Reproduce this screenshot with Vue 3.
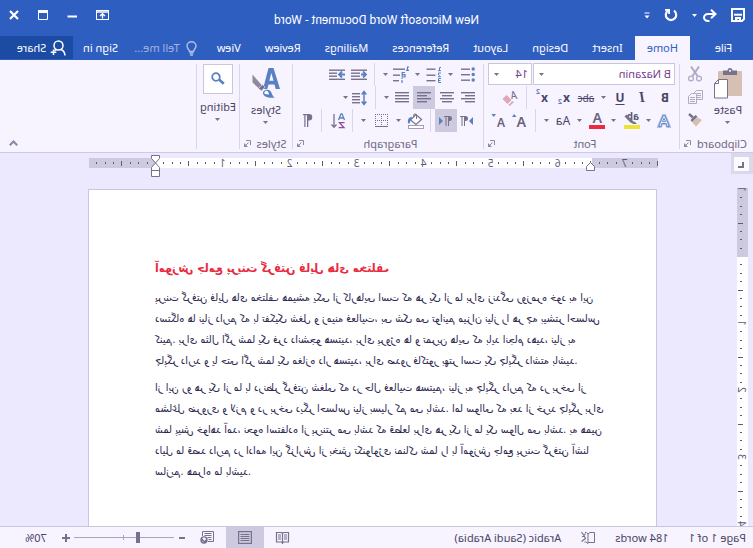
<script setup>
import { h, ref } from 'vue'

const G = '#77728c'
const B = '#5a80c4'

const lines = (list, color = G) =>
  list.map(([x, y, w]) => `<rect x="${x}" y="${y}" width="${w}" height="1.4" fill="${color}"/>`).join('')

const icons = {
  save: [14, 14, '<path d="M1 1h12v12H3L1 11z" fill="none" stroke="#fff" stroke-width="2"/><path d="M3 6.7h8" stroke="#fff" stroke-width="2"/><path d="M4 9h6v4H7.500v-2H6v2H4z" fill="#fff"/>'],
  undo: [14, 13, '<path d="M2 5h7a4 3.500 0 0 1 0 7H7.500" fill="none" stroke="#fff" stroke-width="2"/><path d="M6 .8L1.500 5 6 9.200" fill="none" stroke="#fff" stroke-width="2"/>'],
  redo: [14, 14, '<path d="M4 2.600a5.200 5.200 0 1 0 6 0" fill="none" stroke="#fff" stroke-width="2.200"/><path d="M8 1h5v1.800H9.800V6H8z" fill="#fff"/>'],
  custom: [6, 7, '<path d="M.5 .5h5v1h-5zM.5 3.500h5L3 6.500z" fill="#fff"/>'],
  ribbonOpts: [13, 10, '<rect x=".5" y=".5" width="12" height="9" fill="none" stroke="#fff"/><path d="M0 2h13M6.500 8.500V4M4 6l2.500-2.300L9 6" fill="none" stroke="#fff" stroke-width="1.300"/>'],
  min: [10, 10, '<rect y="5.500" width="9.500" height="2" fill="#fff"/>'],
  max: [10, 10, '<path d="M.5 1v8.500h9V1z" fill="none" stroke="#fff"/><rect width="10" height="3" fill="#fff"/>'],
  close: [10, 10, '<path d="M1 1l8 8M9 1l-8 8" stroke="#fff" stroke-width="2.200"/>'],
  bulb: [11, 15, '<path d="M3.500 10.500C3.500 8.500 1 7.800 1 5a4.500 4.200 0 0 1 9 0c0 2.800-2.500 3.500-2.500 5.500z" fill="none" stroke="#b3c0e4" stroke-width="1.400"/><path d="M3.500 12h4M4 14h3" stroke="#b3c0e4" stroke-width="1.300"/>'],
  person: [16, 16, '<circle cx="7.500" cy="5.500" r="4.500" fill="none" stroke="#fff" stroke-width="1.500"/><path d="M1 15.500c.2-3 1.700-5 4-6M9.500 9.500l2 1M12.500 9.500v5.500M9.700 12.300h5.600" fill="none" stroke="#fff" stroke-width="1.500"/>'],
  caret: [5, 3, `<path d="M0 0h5L2.500 3z" fill="${G}"/>`],
  caretW: [5, 3, '<path d="M0 0h5L2.500 3z" fill="#fff"/>'],
  launch: [7, 7, `<path d="M.5 5V.5H5" fill="none" stroke="#8d88a3"/><path d="M2.500 2.500l3 3" stroke="#8d88a3"/><path d="M7 3v4H3z" fill="#8d88a3"/>`],
  paste: [28, 31, `<rect x="0" y="3" width="24" height="25" rx="1" fill="#d6c0b4"/><path d="M5 2.500h4.500C9.700 1 10.500 0 12 0s2.300 1 2.500 2.500H19V7H5z" fill="#77728c"/><circle cx="12" cy="2.800" r="1.100" fill="#f7f3ff"/><path d="M14.500 11.500h9l4 4v14.500h-13z" fill="#fff" stroke="#77728c"/><path d="M23.500 11.500v4h4" fill="none" stroke="#77728c"/>`],
  cut: [14, 16, '<path d="M3 .5L9.500 10M11 .5L4.500 10" stroke="#b0abc3" stroke-width="2"/><circle cx="3" cy="12.500" r="2.400" fill="none" stroke="#b0abc3" stroke-width="1.300"/><circle cx="11" cy="12.500" r="2.400" fill="none" stroke="#b0abc3" stroke-width="1.300"/>'],
  copy: [15, 14, '<path d="M.5 .5h6l2 2v7h-8z" fill="#f7f3ff" stroke="#b0abc3"/><path d="M2 3.500h4M2 5.500h4M2 7.500h4" stroke="#b0abc3"/><path d="M6.500 3.500h5l3 3v7h-8z" fill="#f7f3ff" stroke="#b0abc3"/><path d="M8 7.500h5M8 9.500h5M8 11.500h5" stroke="#b0abc3"/>'],
  painter: [15, 14, '<path d="M1 7l5-3 5 5-4 4.500z" fill="#d6bfb2"/><path d="M5.500 3.500l2-1.500 5 5-1.500 2z" fill="#77728c"/><path d="M10 4.500L14 1" stroke="#77728c" stroke-width="2.400"/>'],
  eraser: [15, 16, '<text x="0" y="9" font-size="11" font-style="italic" fill="#77728c">A</text><path d="M5.500 10l5-5 4 4-5 5z" fill="#dfa6bd"/><path d="M4.500 11l4.200 4-1.500 1-4-3.800z" fill="#dfa6bd"/>'],
  textFx: [14, 14, '<path d="M1.500 12.500L6 1.500h2l4.500 11h-2.300l-1-3H4.800l-1 3z" fill="#f7f3ff" stroke="#9db5e2" stroke-width="2.400"/><path d="M1.800 12.500L6 2h2l4.200 10.500h-2l-1-3H4.800l-1 3zM5.500 7.700h3L7 4z" fill="#fbf9ff" stroke="#5a80c4" stroke-width=".9"/>'],
  highlight: [17, 17, '<text x="1" y="8" font-size="10" font-weight="700" fill="#5e5976">ab</text><path d="M5 11L13.500 2.500l2 2L9 11z" fill="#77728c"/><path d="M3 12l2.500-2.500L8 12z" fill="#77728c"/><rect y="13" width="16" height="4" fill="#ebe336"/>'],
  fontColor: [16, 17, '<text x="3" y="11" font-size="14" font-weight="600" fill="#68637d">A</text><rect y="13" width="16" height="4" fill="#ea2a41"/>'],
  grow: [14, 15, '<text x="0" y="14" font-size="14" font-weight="600" fill="#68637d">A</text><path d="M9.500 4h4.500L11.800 1z" fill="#5a80c4"/>'],
  shrink: [14, 15, '<text x="0" y="14" font-size="12" font-weight="600" fill="#68637d">A</text><path d="M9 1h4.500L11.300 4z" fill="#5a80c4"/>'],
  bullets: [14, 15, `<g fill="${B}"><circle cx="1.800" cy="2" r="1.700"/><circle cx="1.800" cy="7.500" r="1.700"/><circle cx="1.800" cy="13" r="1.700"/></g>` + lines([[5, 1.500, 9], [5, 7, 9], [5, 12.500, 9]])],
  numbers: [15, 17, `<g fill="none" stroke="${B}"><path d="M0 1.500h1.500V5M0 4.700h3M0 7h2.500v2L.5 10.700H3M0 12.500h2.500v4H0M.5 14.500h2"/></g>` + lines([[5.500, 2.500, 9], [5.500, 8.500, 9], [5.500, 14, 9]])],
  multi: [17, 17, `<g fill="none" stroke="${B}"><path d="M0 1h1.500v3.500M0 4.300h3M7 12v1M7 14v3" stroke-width="1.200"/><path d="M4 6.500h2.800V11H4V8.700h3" stroke-width="1.200"/></g>` + lines([[4, 2.500, 12], [9, 8.500, 7], [10, 14, 6]])],
  outdent: [16, 12, lines([[0, .5, 16], [7, 3.500, 9], [7, 6.500, 9], [0, 9.600, 16]]) + `<path d="M6 5.500H2M4 2.500L1 5.500l3 3" stroke="${B}" stroke-width="1.800" fill="none"/>`],
  indent: [16, 12, lines([[0, .5, 16], [8, 3.500, 8], [8, 6.500, 8], [0, 9.600, 16]]) + `<path d="M0 5.500h5M3 2.500l3 3-3 3" stroke="${B}" stroke-width="1.800" fill="none"/>`],
  left: [14, 11, lines([[0, 0, 14], [0, 3, 10], [0, 6, 14], [0, 9, 10]])],
  center: [14, 11, lines([[0, 0, 14], [2, 3, 10], [0, 6, 14], [2, 9, 10]])],
  right: [14, 11, lines([[0, 0, 14], [4, 3, 10], [0, 6, 14], [4, 9, 10]])],
  justify: [14, 11, lines([[0, 0, 14], [0, 3, 14], [0, 6, 14], [0, 9, 14]])],
  spacing: [15, 16, `<path d="M3 2v12M.7 4.500L3 1.500l2.300 3M.7 11.500L3 14.500l2.300-3" fill="none" stroke="${B}" stroke-width="1.500"/>` + lines([[7, 3, 8], [7, 6, 8], [7, 9, 8], [7, 12, 8]])],
  ltr: [13, 10, `<path d="M0 1v8l4-4z" fill="${B}"/><path d="M7.500 0a2.500 2.500 0 0 0 0 5H8v5h1V1h1.500v9h1V1H13V0z" fill="${G}"/>`],
  rtl: [13, 10, `<path d="M13 1v8L9 5z" fill="${B}"/><path d="M2.500 0a2.500 2.500 0 0 0 0 5H3v5h1V1h1.500v9h1V1H8V0z" fill="${G}"/>`],
  bucket: [17, 16, `<path d="M2.500 6.500L8 1.500l5.500 5.500L8 11.500z" fill="#fff" stroke="${G}" stroke-width="1.200"/><path d="M7.500 6V2.500a1.500 1.500 0 0 1 3 0V4" fill="none" stroke="${G}"/><path d="M12 4c3 0 4.500 2 4 6-1 1-2 .5-2-1z" fill="${B}"/><rect x=".5" y="12.500" width="15" height="3" fill="#fff" stroke="#a39eb5"/>`],
  borders: [13, 13, `<path d="M.5 0v12M6.500 0v12M12.500 0v12M0 .5h13M0 6.500h13" stroke="${G}" stroke-dasharray="1 1"/><path d="M0 12.500h13" stroke="${G}"/>`],
  sort: [14, 16, `<path d="M.5 7L3 .8h1L6.500 7M1.500 5h4" fill="none" stroke="${B}" stroke-width="1.300"/><path d="M.5 9.700h5L1 14.700h5.300" fill="none" stroke="#8a4fa0" stroke-width="1.300"/><path d="M11 1v13M8.500 11.500L11 14.300l2.500-2.800" fill="none" stroke="${G}" stroke-width="1.300"/>`],
  pilcrow: [10, 13, `<path d="M4 0a3.300 3.300 0 0 0 0 6.600h.7V13H6V1.200h1.500V13h1.200V1.200H10V0z" fill="${G}"/>`],
  styles: [28, 31, `<path d="M0 21L6.500 0h5L17 21h-4.300l-1.200-4.500H5.500L4.300 21zM6.400 12.800h4.300L8.700 5z" fill="${B}"/><path d="M27.500 6.500v8l-7 6.500-3-3z" fill="#8e8a9e"/><path d="M17.500 16.500l4 4-3 2.500-3.500-4z" fill="#77728c" stroke="#f7f3ff" stroke-width=".6"/><path d="M5 29.500c3.500-1 2.500-6 6-7.500 3.500-1 6.500 1 6 3.500-1 4-7 5-12 4z" fill="${B}"/><path d="M11 26.500c.2-2.500 1.500-4 3-3.700s2 2 1.300 3.200z" fill="#fff"/>`],
  find: [14, 14, `<circle cx="9" cy="5" r="3.800" fill="#fff" stroke="${B}" stroke-width="1.800"/><path d="M6 7.500L1.200 11.800" stroke="${B}" stroke-width="2.600"/>`],
  chevron: [9, 6, '<path d="M.8 5.300L4.500 1.500l3.700 3.800" fill="none" stroke="#8d88a3" stroke-width="2"/>'],
  proof: [14, 13, `<path d="M7 11.500H.5v-10H5l2 1.500v9.500M7 3l1.500-1.500H10M7 12.500l2-1.500h1.500" fill="none" stroke="${G}"/><path d="M9.500 2.500l1.500 2 2.500-3.500M13 5.500h-2.500l-1 2 4 3" fill="none" stroke="${G}" stroke-width="1.200"/>`],
  read: [13, 13, `<path d="M.5 1.500h5l1 1 1-1h5v9.500h-5l-1 1-1-1h-5zM6.500 2v11" fill="none" stroke="${G}" stroke-width="1.200"/><path d="M2 4h3M2 6h3M2 8h3M8 4h3M8 6h3M8 8h3" stroke="${G}"/>`],
  print: [14, 13, `<rect x=".6" y=".6" width="12.800" height="11.800" fill="none" stroke="${G}" stroke-width="1.200"/><path d="M2.500 3.500h9M2.500 5.500h9M2.500 7.500h9M2.500 9.500h9" stroke="${G}"/>`],
  web: [14, 13, `<path d="M6 10.500H.5V.5h11V5" fill="none" stroke="${G}"/><path d="M2.500 2.500h7M2.500 4.500h7M2.500 6.500h4M2.500 8.500h3" stroke="${G}"/><circle cx="10" cy="9" r="3.700" fill="${G}"/><path d="M8 8l2-1.500 1.500 1-2 2zM10.500 11l1.500-1" fill="#f7f3ff" stroke="#f7f3ff" stroke-width=".6"/>`],
  minus: [7, 8, `<rect y="3" width="6" height="2" fill="${G}"/>`],
  plus: [8, 8, `<path d="M4 0v8M0 4h8" stroke="${G}" stroke-width="2"/>`],
}

const Icon = (props) => {
  const [w, ht, body] = icons[props.n]
  return h('svg', { width: w, height: ht, viewBox: `0 0 ${w} ${ht}`, 'aria-hidden': 'true', innerHTML: body })
}
Icon.props = ['n']

const tabs = ['Insert', 'Design', 'Layout', 'References', 'Mailings', 'Review', 'View']
const font = ref('B Nazanin')
const size = ref('14')
const zoom = ref(35)

const INCH = 67
const hMarks = []
for (let i = -8; i <= 60; i++) {
  const x = 502.5 - (i * INCH) / 8
  if (i === 0 || x < 0 || x > 569) continue
  hMarks.push({ x, n: i > 0 && i % 8 === 0 ? i / 8 : 0, half: i % 4 === 0 })
}
const vMarks = []
for (let i = -8; i <= 32; i++) {
  if (i === 0) continue
  vMarks.push({ y: 68 + (i * INCH) / 8, n: i % 8 === 0 ? Math.abs(i / 8) : 0, half: i % 4 === 0 })
}

const first = [
  'پرینت گرفتن فایل های مختلف همیشه یکی از کارهایی است که هر یک از ما برای زندگی روزمره خود به این',
  'دستگاه ها نیاز داریم که با تفکیک شغل و زمینه فعالیت، بی شک می توانیم میزان نیاز را هر چه بیشتر احساس',
  'کنیم. برای مثال اگر شما یک فرد دانشجو هستید، برای پروژه ها و تمرین هایی که باید انجام دهید، نیاز به',
  'چاپگر دارید و یا حتی اگر شما یک مغازه دار هستید، برای صدور فاکتور بهتر است یک چاپگر داشته باشید.',
]
const second = [
  'از این رو هر یک از ما با درنظر گرفتن شغلی که در حال فعالیت هستیم، نیاز به چاپگر داریم که در برخی از',
  'مشاغل ضروری و لازم و در برخی دیگر احساس نیاز بسیار کم می باشد. اما سوالی که بعد از خرید چاپگر برای',
  'شما پیش خواهد آمد، نحوه استفاده از پرینتر می باشد که قطعا برای هر یک از ما یک سوال می باشد. به همین',
  'دلیل ما قصد داریم در ادامه این گزارش از بخش تکنولوژی نمناک شما را با آموزش جامع پرینت گرفتن آشنا',
  'سازیم. همراه ما باشید.',
]
</script>

<template>
  <div class="window">
    <header class="titlebar">
      <div class="quick">
        <button aria-label="Save"><Icon n="save" /></button>
        <button aria-label="Undo" class="undo"><Icon n="undo" /><Icon n="caretW" /></button>
        <button aria-label="Repeat"><Icon n="redo" /></button>
        <button aria-label="Customize toolbar"><Icon n="custom" /></button>
      </div>
      <h1>New Microsoft Word Document - Word</h1>
      <div class="controls">
        <button aria-label="Ribbon display options"><Icon n="ribbonOpts" /></button>
        <button aria-label="Minimize"><Icon n="min" /></button>
        <button aria-label="Maximize"><Icon n="max" /></button>
        <button aria-label="Close"><Icon n="close" /></button>
      </div>
    </header>

    <nav class="tabs">
      <button class="file">File</button>
      <button class="tab active">Home</button>
      <button v-for="t in tabs" :key="t" class="tab">{{ t }}</button>
      <label class="tell"><Icon n="bulb" /><input type="text" placeholder="Tell me..." aria-label="Tell me" /></label>
      <button class="sign">Sign in</button>
      <button class="share"><Icon n="person" />Share</button>
    </nav>

    <section class="ribbon">
      <div class="group clipboard">
        <div class="body split">
          <button class="big"><Icon n="paste" /><span>Paste</span><Icon n="caret" /></button>
          <div class="stack">
            <button aria-label="Cut"><Icon n="cut" /></button>
            <button aria-label="Copy"><Icon n="copy" /></button>
            <button aria-label="Format painter"><Icon n="painter" /></button>
          </div>
        </div>
        <footer><span>Clipboard</span><button aria-label="Clipboard options"><Icon n="launch" /></button></footer>
      </div>

      <div class="group font">
        <div class="body">
          <div class="row combos">
            <label class="combo"><select v-model="font" aria-label="Font"><option>B Nazanin</option></select><Icon n="caret" /></label>
            <label class="combo"><select v-model="size" aria-label="Font size"><option>14</option></select><Icon n="caret" /></label>
          </div>
          <div class="row f2">
            <button class="glyph bold">B</button>
            <button class="glyph italic">I</button>
            <button class="glyph under">U</button>
            <button aria-label="Underline style"><Icon n="caret" /></button>
            <button class="glyph strike">abc</button>
            <button class="glyph" aria-label="Subscript">x<sub>2</sub></button>
            <button class="glyph" aria-label="Superscript">x<sup>2</sup></button>
            <i class="sep"></i>
            <button aria-label="Clear formatting"><Icon n="eraser" /></button>
          </div>
          <div class="row f3">
            <button aria-label="Text effects"><Icon n="textFx" /></button>
            <button aria-label="Effects menu"><Icon n="caret" /></button>
            <button aria-label="Highlight"><Icon n="highlight" /></button>
            <button aria-label="Highlight menu"><Icon n="caret" /></button>
            <button aria-label="Font color"><Icon n="fontColor" /></button>
            <button aria-label="Color menu"><Icon n="caret" /></button>
            <button class="glyph case">Aa</button>
            <button aria-label="Case menu"><Icon n="caret" /></button>
            <i class="sep"></i>
            <button aria-label="Grow font"><Icon n="grow" /></button>
            <button aria-label="Shrink font"><Icon n="shrink" /></button>
          </div>
        </div>
        <footer><span>Font</span><button aria-label="Font options"><Icon n="launch" /></button></footer>
      </div>

      <div class="group para">
        <div class="body">
          <div class="row p1">
            <button aria-label="Bullets"><Icon n="bullets" /></button>
            <button aria-label="Bullets menu"><Icon n="caret" /></button>
            <button aria-label="Numbering"><Icon n="numbers" /></button>
            <button aria-label="Numbering menu"><Icon n="caret" /></button>
            <button aria-label="Multilevel list"><Icon n="multi" /></button>
            <button aria-label="Multilevel menu"><Icon n="caret" /></button>
            <i class="sep"></i>
            <button aria-label="Decrease indent"><Icon n="outdent" /></button>
            <button aria-label="Increase indent"><Icon n="indent" /></button>
          </div>
          <div class="row p2">
            <button aria-label="Align left"><Icon n="left" /></button>
            <button aria-label="Center"><Icon n="center" /></button>
            <button aria-label="Align right" class="on"><Icon n="right" /></button>
            <button aria-label="Justify"><Icon n="justify" /></button>
            <button aria-label="Justify menu"><Icon n="caret" /></button>
            <i class="sep"></i>
            <button aria-label="Line spacing"><Icon n="spacing" /></button>
            <button aria-label="Spacing menu"><Icon n="caret" /></button>
          </div>
          <div class="row p3">
            <button aria-label="Left to right"><Icon n="ltr" /></button>
            <button aria-label="Right to left" class="on"><Icon n="rtl" /></button>
            <i class="sep"></i>
            <button aria-label="Shading"><Icon n="bucket" /></button>
            <button aria-label="Shading menu"><Icon n="caret" /></button>
            <button aria-label="Borders"><Icon n="borders" /></button>
            <button aria-label="Borders menu"><Icon n="caret" /></button>
            <i class="sep"></i>
            <button aria-label="Sort"><Icon n="sort" /></button>
            <i class="sep"></i>
            <button aria-label="Show marks"><Icon n="pilcrow" /></button>
          </div>
        </div>
        <footer><span>Paragraph</span><button aria-label="Paragraph options"><Icon n="launch" /></button></footer>
      </div>

      <div class="group styles">
        <div class="body split">
          <button class="big"><Icon n="styles" /><span>Styles</span><Icon n="caret" /></button>
        </div>
        <footer><span>Styles</span><button aria-label="Styles options"><Icon n="launch" /></button></footer>
      </div>

      <div class="group editing">
        <div class="body split">
          <button class="big"><span class="frame"><Icon n="find" /></span><span>Editing</span><Icon n="caret" /></button>
        </div>
      </div>
      <button class="collapse" aria-label="Collapse ribbon"><Icon n="chevron" /></button>
    </section>

    <main class="work">
      <div class="side">
        <button class="tabstop" aria-label="Tab stop">
          <svg width="15" height="14" viewBox="0 0 15 14"><rect width="15" height="14" fill="#fbfaff" /><path d="M6 5v5H11" fill="none" stroke="#77728c" stroke-width="2" /></svg>
        </button>
        <svg class="vruler" width="11" height="338" viewBox="0 0 11 338">
          <rect width="11" height="338" fill="#fff" />
          <rect width="11" height="69" fill="#cdc9df" />
          <template v-for="m in vMarks" :key="m.y">
            <text v-if="m.n" x="0" y="0" :transform="`translate(10 ${m.y}) rotate(-90)`" text-anchor="middle">{{ m.n }}</text>
            <rect v-else :x="m.half ? 5 : 6" :y="Math.round(m.y)" :width="m.half ? 5 : 2" height="1" />
          </template>
        </svg>
      </div>
      <div class="canvas">
        <svg class="hruler" width="569" height="24" viewBox="0 0 569 24">
          <rect y="4" width="569" height="10" fill="#fff" />
          <rect y="4" width="66" height="10" fill="#cdc9df" />
          <rect x="502" y="4" width="67" height="10" fill="#cdc9df" />
          <template v-for="m in hMarks" :key="m.x">
            <text v-if="m.n" :x="m.x" y="13" text-anchor="middle">{{ m.n }}</text>
            <rect v-else :x="Math.floor(m.x)" :y="m.half ? 7 : 8" width="1" :height="m.half ? 5 : 2" />
          </template>
          <path d="M63.500 16.500v-4l4-4 4 4v4z" class="handle" />
          <path d="M498.500 1.500h8v3l-4 4.500 4 4.500v9h-8v-9l4-4.500-4-4.500zM498.500 16.500h8" class="handle" />
        </svg>
        <article class="page" dir="rtl" lang="fa">
          <h2>آموزش جامع پرینت گرفتن فایل های مختلف</h2>
          <p><template v-for="(l, i) in first" :key="i">{{ l }}<br /></template></p>
          <p><template v-for="(l, i) in second" :key="i">{{ l }}<br /></template></p>
        </article>
      </div>
    </main>

    <footer class="status">
      <span>Page 1 of 1</span>
      <span>184 words</span>
      <button aria-label="Proofing"><Icon n="proof" /></button>
      <span>Arabic (Saudi Arabia)</span>
      <div class="views">
        <button aria-label="Read mode"><Icon n="read" /></button>
        <button aria-label="Print layout" class="on"><Icon n="print" /></button>
        <button aria-label="Web layout"><Icon n="web" /></button>
      </div>
      <div class="zoom">
        <button aria-label="Zoom out"><Icon n="minus" /></button>
        <input v-model="zoom" type="range" min="0" max="100" aria-label="Zoom" />
        <button aria-label="Zoom in"><Icon n="plus" /></button>
        <span>70%</span>
      </div>
    </footer>
  </div>
</template>

<style>
body {
  margin: 0;
  background: #ece9fe;
}
</style>

<style scoped>
.window {
  display: flex;
  flex-direction: column;
  height: 100vh;
  overflow: hidden;
  transform: scaleX(-1);
  font: 11px/16px "Noto Sans", "Open Sans", sans-serif;
  color: #4a4566;
  background: #ece9fe;
}
button {
  display: flex;
  align-items: center;
  justify-content: center;
  padding: 0;
  border: 0;
  background: none;
  color: inherit;
  font: inherit;
}
:deep(svg) {
  display: block;
  flex: none;
  overflow: visible;
}

.titlebar {
  display: grid;
  grid-template-columns: 1fr auto 1fr;
  height: 36px;
  background: #2f5ec1;
  color: #fff;
}
.quick {
  display: flex;
  align-items: center;
  gap: 14px;
  padding: 0 8px;
  height: 30px;
}
.undo {
  gap: 6px;
}
h1 {
  margin: 0;
  padding-top: 4px;
  font: 400 12px/32px Roboto, "Noto Sans", sans-serif;
}
.controls {
  display: flex;
  justify-content: flex-end;
  align-items: center;
  gap: 19px;
  height: 30px;
  padding-right: 9px;
}

.tabs {
  display: flex;
  height: 24px;
  background: #2f5ec1;
  color: #fff;
}
.file {
  width: 59px;
  margin-right: 4px;
}
.tab {
  padding: 0 12px;
  white-space: nowrap;
}
.active {
  background: #f7f3ff;
  color: #2f5ec1;
}
.tell {
  display: flex;
  align-items: center;
  gap: 6px;
  flex: 1;
  min-width: 0;
  margin-left: 8px;
}
.tell input {
  width: 100%;
  min-width: 0;
  padding: 0;
  border: 0;
  background: none;
  color: #fff;
  font: inherit;
}
.tell input::placeholder {
  color: #a3b3df;
  opacity: 1;
}
.sign {
  margin-right: 10px;
  white-space: nowrap;
}
.share {
  gap: 4px;
  width: 73px;
  height: 23px;
  padding-right: 10px;
  background: #1b4ba3;
}

.ribbon {
  display: flex;
  height: 92px;
  border-bottom: 1px solid #cfcae3;
  background: #f7f3ff;
}
.group {
  box-sizing: border-box;
  display: flex;
  flex-direction: column;
  height: 85px;
  margin-top: 4px;
  border-right: 1px solid #d9d5ea;
}
.body {
  flex: none;
  height: 75px;
  margin-top: -1px;
}
.group footer {
  display: grid;
  grid-template-columns: 1fr auto;
  align-items: center;
  height: 11px;
  line-height: 11px;
  padding-right: 4px;
  color: #6f6a84;
  text-align: center;
}
.clipboard {
  width: 74px;
}
.font {
  width: 196px;
  padding-left: 4px;
}
.para {
  width: 191px;
  padding-left: 6px;
}
.styles {
  width: 53px;
}
.editing {
  width: 43px;
}
.split {
  display: flex;
}
.big {
  flex-direction: column;
  justify-content: flex-start;
  gap: 3px;
  width: 100%;
  padding-top: 5px;
}
.clipboard .big {
  width: 50px;
}
.editing .big {
  padding-top: 1px;
}
.frame {
  display: grid;
  place-items: center;
  width: 28px;
  height: 28px;
  margin-bottom: 2px;
  border: 1px solid #cbc6df;
  background: #fff;
}
.stack {
  display: grid;
  grid-template-rows: 22px 24px 22px;
}
.row {
  display: grid;
  height: 23px;
}
.row > * {
  height: 23px;
}
.combos {
  grid-template-columns: 142px 44px;
  gap: 1px;
}
.combo {
  display: grid;
  grid-template-columns: 1fr 10px;
  align-items: center;
  box-sizing: border-box;
  height: 22px;
  border: 1px solid #cbc6df;
  background: #fff;
}
.combo select {
  min-width: 0;
  padding: 0 0 0 3px;
  border: 0;
  appearance: none;
  background: none;
  color: #74408c;
  font: inherit;
}
.f2 {
  grid-template-columns: 20px 26px 18px 14px 22px 22px 22px 8px 26px;
}
.f3 {
  grid-template-columns: 22px 8px 26px 10px 24px 10px 24px 8px 14px 20px 22px;
}
.p1 {
  grid-template-columns: 18px 16px 18px 14px 20px 10px 12px 20px 24px;
}
.p2 {
  grid-template-columns: 18px 24px 22px 22px 8px 14px 18px 10px;
}
.p3 {
  grid-template-columns: 20px 22px 8px 22px 12px 22px 14px 8px 22px 10px 18px;
}
.sep {
  width: 1px;
  background: #d9d5ea;
  justify-self: center;
}
.on {
  background: #cdc9df;
}
.glyph {
  gap: 1px;
  font-size: 12px;
  font-weight: 700;
}
.italic {
  font-family: "Liberation Serif", serif;
  font-style: italic;
  font-size: 14px;
}
.under {
  text-decoration: underline;
  text-underline-offset: 2px;
}
.strike {
  font-size: 10px;
  font-weight: 400;
  text-decoration: line-through;
}
.case {
  font-weight: 400;
}
sub,
sup {
  color: #5a80c4;
  font-size: 7px;
  line-height: 8px;
}
sub {
  align-self: flex-end;
  padding-bottom: 3px;
}
sup {
  align-self: flex-start;
  padding-top: 2px;
}
.collapse {
  align-self: flex-end;
  margin: 0 9px 6px auto;
}

.work {
  display: flex;
  flex: 1;
  min-height: 0;
  overflow: hidden;
}
.side {
  width: 22px;
}
.tabstop {
  width: 22px;
  height: 21px;
  background: #dbd8ec;
}
.vruler {
  margin: 14px 0 0 5px;
}
.work text {
  fill: #5e5976;
  font-size: 10px;
}
.work svg rect:not([fill]) {
  fill: #5e5976;
}
.handle {
  fill: #fff;
  stroke: #77728c;
}
.canvas {
  flex: 1;
  padding: 1px 88px 0 73px;
}
.page {
  box-sizing: border-box;
  min-height: 600px;
  margin: 11px 0 0 1px;
  padding: 68px 66px 0 0;
  border: 1px solid #cbc6df;
  background: #fff;
  color: #2d2850;
  font: 11px/21px "DejaVu Sans Condensed", "DejaVu Sans", sans-serif;
  white-space: nowrap;
}
h2 {
  margin: 0 0 8px;
  color: #ea2a41;
  font-size: 12px;
  line-height: 21px;
}
.page p {
  margin: 0 0 6px;
}

.status {
  display: flex;
  align-items: center;
  gap: 20px;
  height: 21px;
  padding: 0 0 0 7px;
  border-top: 1px solid #cbc6df;
  background: #f7f3ff;
  white-space: nowrap;
}
.views {
  display: flex;
  margin-left: auto;
}
.views button {
  width: 38px;
  height: 21px;
}
.zoom {
  display: flex;
  align-items: center;
  gap: 4px;
  margin-left: -17px;
  padding-right: 25px;
}
.zoom span {
  margin-left: 11px;
}
.zoom input {
  appearance: none;
  width: 100px;
  height: 11px;
  margin: 0;
  background:
    linear-gradient(#a9a4bd, #a9a4bd) 50% 50% / 1px 5px no-repeat,
    linear-gradient(#a9a4bd, #a9a4bd) 0 50% / 100% 1px no-repeat;
}
.zoom input::-webkit-slider-thumb {
  appearance: none;
  width: 4px;
  height: 11px;
  background: #77728c;
}
</style>
